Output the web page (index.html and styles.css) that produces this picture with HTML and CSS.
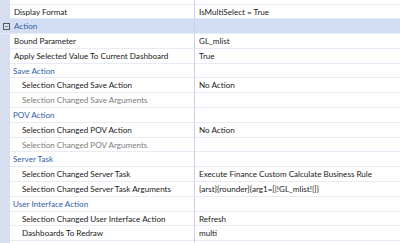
FILE: index.html
```html
<!DOCTYPE html>
<html lang="en">
<head>
	<title>Property Grid</title>
	<link rel="stylesheet" href="styles.css">
</head>
<body>
	<div class="grid">
		<div class="row row-cut">
			<div class="name"></div>
			<div class="value"></div>
		</div>
		<div class="row">
			<div class="name">Display Format</div>
			<div class="value">IsMultiSelect = True</div>
		</div>
		<div class="row category">
			<div class="name"><span class="toggle">−</span>Action</div>
			<div class="value"></div>
		</div>
		<div class="row">
			<div class="name">Bound Parameter</div>
			<div class="value">GL_mlist</div>
		</div>
		<div class="row">
			<div class="name">Apply Selected Value To Current Dashboard</div>
			<div class="value">True</div>
		</div>
		<div class="row group">
			<div class="name">Save Action</div>
			<div class="value"></div>
		</div>
		<div class="row sub">
			<div class="name">Selection Changed Save Action</div>
			<div class="value">No Action</div>
		</div>
		<div class="row sub off">
			<div class="name">Selection Changed Save Arguments</div>
			<div class="value"></div>
		</div>
		<div class="row group">
			<div class="name">POV Action</div>
			<div class="value"></div>
		</div>
		<div class="row sub">
			<div class="name">Selection Changed POV Action</div>
			<div class="value">No Action</div>
		</div>
		<div class="row sub off">
			<div class="name">Selection Changed POV Arguments</div>
			<div class="value"></div>
		</div>
		<div class="row group">
			<div class="name">Server Task</div>
			<div class="value"></div>
		</div>
		<div class="row sub">
			<div class="name">Selection Changed Server Task</div>
			<div class="value">Execute Finance Custom Calculate Business Rule</div>
		</div>
		<div class="row sub">
			<div class="name">Selection Changed Server Task Arguments</div>
			<div class="value">{arst}{rounder}{arg1=[|!GL_mlist!|]}</div>
		</div>
		<div class="row group">
			<div class="name">User Interface Action</div>
			<div class="value"></div>
		</div>
		<div class="row sub">
			<div class="name">Selection Changed User Interface Action</div>
			<div class="value">Refresh</div>
		</div>
		<div class="row sub">
			<div class="name">Dashboards To Redraw</div>
			<div class="value">multi</div>
		</div>
		<div class="row">
			<div class="name"></div>
			<div class="value"></div>
		</div>
	</div>
</body>
</html>
```

FILE: styles.css
```css
* {
	margin: 0;
	padding: 0;
	box-sizing: border-box;
}

html, body {
	height: 100%;
	overflow: hidden;
	background: #fff;
}

.grid {
	font-family: Lato, "Noto Sans", sans-serif;
	font-size: 8.1px;
	color: #1a1a1a;
	background: linear-gradient(to right, #d6def0 10px, #fff 10px);
}

.row {
	display: flex;
	height: 14.8px;
	line-height: 14px;
}

.row-cut {
	height: 4.5px;
}

/* name column: strip + text */
.name {
	flex: none;
	width: 185px;
	margin-left: 10px;
	padding-left: 4px;
	border-bottom: 1px solid #e6ebf5;
	border-right: 1px solid #c9d1e2;
	white-space: nowrap;
	overflow: hidden;
}

.value {
	flex: 1;
	padding-left: 4px;
	border-bottom: 1px solid #e6ebf5;
	white-space: nowrap;
	overflow: hidden;
}

.category {
	background: #d3def4;
}

.category .name {
	margin-left: 0;
	width: 195px;
	padding-left: 3px;
	color: #2f5ea8;
	display: flex;
	align-items: center;
}

.toggle {
	display: inline-block;
	width: 7px;
	height: 7px;
	border: 1px solid #555;
	font-size: 7px;
	line-height: 4px;
	text-align: center;
	color: #333;
	margin-right: 4px;
}

.group .name {
	color: #2f5ea8;
	padding-left: 3px;
}

.sub .name {
	padding-left: 12px;
}

.off .name {
	color: #7c7c7c;
}
```
